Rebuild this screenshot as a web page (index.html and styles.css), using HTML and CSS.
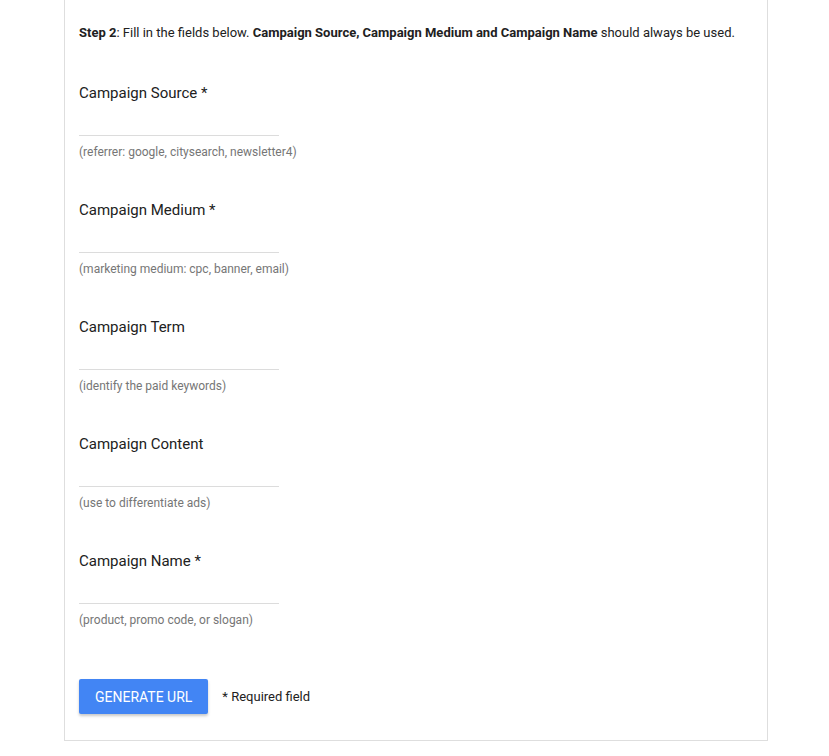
FILE: index.html
```html
<!DOCTYPE html>
<html lang="en">
<head>
<meta charset="utf-8">
<title>Campaign URL Builder</title>
<link rel="stylesheet" href="styles.css">
</head>
<body>
<div class="card">
  <p class="step"><b>Step 2</b>: Fill in the fields below. <b>Campaign Source, Campaign Medium and Campaign Name</b> should always be used.</p>

  <div class="field">
    <label class="label" for="src">Campaign Source *</label>
    <input class="input" id="src" type="text">
    <div class="hint">(referrer: google, citysearch, newsletter4)</div>
  </div>

  <div class="field">
    <label class="label" for="med">Campaign Medium *</label>
    <input class="input" id="med" type="text">
    <div class="hint">(marketing medium: cpc, banner, email)</div>
  </div>

  <div class="field">
    <label class="label" for="term">Campaign Term</label>
    <input class="input" id="term" type="text">
    <div class="hint">(identify the paid keywords)</div>
  </div>

  <div class="field">
    <label class="label" for="content">Campaign Content</label>
    <input class="input" id="content" type="text">
    <div class="hint">(use to differentiate ads)</div>
  </div>

  <div class="field">
    <label class="label" for="name">Campaign Name *</label>
    <input class="input" id="name" type="text">
    <div class="hint">(product, promo code, or slogan)</div>
  </div>

  <div class="actions">
    <button class="btn" type="button">GENERATE URL</button>
    <span class="req">* Required field</span>
  </div>
</div>
</body>
</html>
```

FILE: styles.css
```css
html, body {
  margin: 0;
  padding: 0;
  background: #fff;
}
body {
  font-family: Roboto, "Liberation Sans", Arial, sans-serif;
  color: #212121;
}
.card {
  box-sizing: border-box;
  width: 704px;
  margin-left: 64px;
  border: 1px solid #dedede;
  border-top: 0;
  padding: 23px 14px 26px;
}
.step {
  margin: 0;
  font-size: 13px;
  line-height: 20px;
}
.step b {
  font-weight: 700;
}
.field {
  margin-top: 40px;
}
.field + .field {
  margin-top: 40px;
}
.label {
  display: block;
  font-size: 15px;
  line-height: 20px;
  color: #212121;
}
.input {
  display: block;
  box-sizing: border-box;
  width: 200px;
  height: 33px;
  margin: 0;
  padding: 0;
  border: 0;
  border-bottom: 1px solid #dcdcdc;
  outline: none;
  background: transparent;
  font-family: inherit;
  font-size: 15px;
}
.hint {
  margin-top: 8px;
  font-size: 12px;
  line-height: 16px;
  color: #767676;
}
.actions {
  display: flex;
  align-items: center;
  gap: 14px;
  margin-top: 51px;
}
.btn {
  box-sizing: border-box;
  height: 35px;
  padding: 0 16px;
  border: 0;
  border-radius: 2px;
  background: #4285f4;
  color: #fff;
  font-family: inherit;
  font-size: 14px;
  font-weight: 400;
  box-shadow: 0 2px 3px rgba(0,0,0,0.22);
  cursor: pointer;
}
.req {
  font-size: 13px;
  color: #212121;
}
```
